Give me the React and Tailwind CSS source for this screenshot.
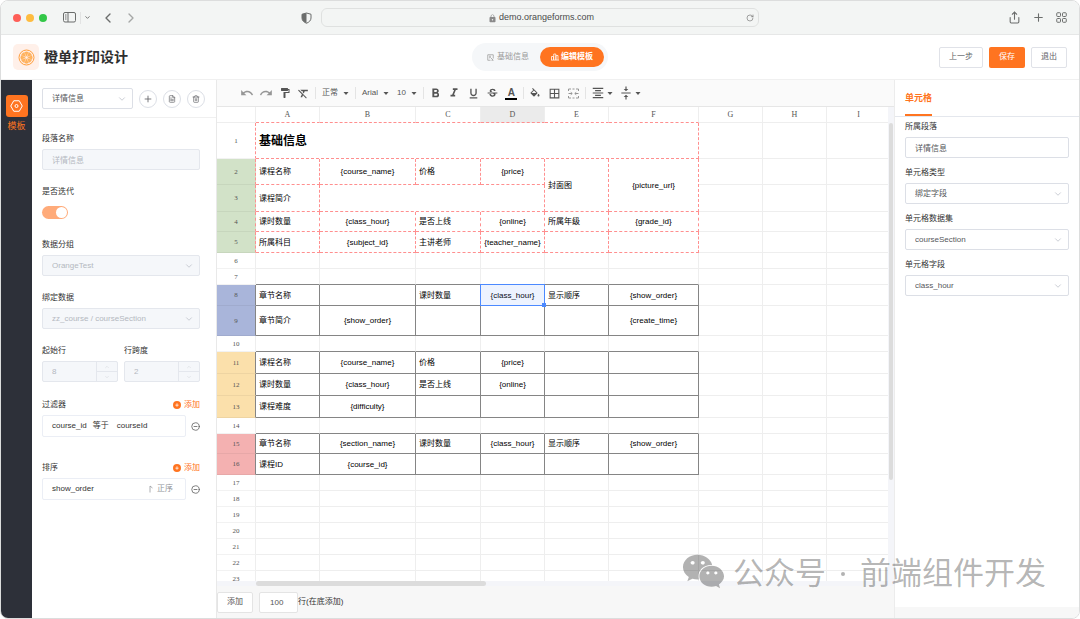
import { useState } from 'react';
import { clsx } from 'clsx';
import { ChevronDown, ChevronLeft, ChevronRight, ChevronUp, CircleMinus, FileText, Plus, RotateCw, Share, Trash2 } from 'lucide-react';
import {
    MdBorderAll,
    MdFormatAlignCenter,
    MdFormatBold,
    MdFormatClear,
    MdFormatItalic,
    MdFormatPaint,
    MdFormatUnderlined,
    MdLock,
    MdRedo,
    MdStrikethroughS,
    MdUndo,
    MdVerticalAlignCenter,
} from 'react-icons/md';
import { FaCirclePlus, FaWeixin } from 'react-icons/fa6';

const COLUMNS = [
    { name: 'A', width: 'w-16' },
    { name: 'B', width: 'w-24' },
    { name: 'C', width: 'w-[65px]' },
    { name: 'D', width: 'w-16' },
    { name: 'E', width: 'w-16' },
    { name: 'F', width: 'w-[90px]' },
    { name: 'G', width: 'w-16' },
    { name: 'H', width: 'w-16' },
    { name: 'I', width: 'w-16' },
];

// section: which print block the row belongs to, it decides the header colour and the cell borders
const ROWS = [
    { height: 'h-9', section: 'title', cells: { A: { text: '基础信息', colSpan: 6, title: true } } },
    {
        height: 'h-[26px]',
        section: 'detail',
        cells: {
            A: { text: '课程名称' },
            B: { text: '{course_name}', center: true },
            C: { text: '价格' },
            D: { text: '{price}', center: true },
            E: { text: '封面图', rowSpan: 2 },
            F: { text: '{picture_url}', center: true, rowSpan: 2 },
        },
    },
    {
        height: 'h-[27px]',
        section: 'detail',
        cells: { A: { text: '课程简介' }, B: { text: '', colSpan: 3 }, E: { covered: true }, F: { covered: true } },
    },
    {
        height: 'h-5',
        section: 'detail',
        cells: {
            A: { text: '课时数量' },
            B: { text: '{class_hour}', center: true },
            C: { text: '是否上线' },
            D: { text: '{online}', center: true },
            E: { text: '所属年级' },
            F: { text: '{grade_id}', center: true },
        },
    },
    {
        height: 'h-[21px]',
        section: 'detail',
        cells: {
            A: { text: '所属科目' },
            B: { text: '{subject_id}', center: true },
            C: { text: '主讲老师' },
            D: { text: '{teacher_name}', center: true },
        },
    },
    { height: 'h-4' },
    { height: 'h-4' },
    {
        height: 'h-[21px]',
        section: 'chapter',
        cells: {
            A: { text: '章节名称' },
            C: { text: '课时数量' },
            D: { text: '{class_hour}', center: true, selected: true },
            E: { text: '显示顺序' },
            F: { text: '{show_order}', center: true },
        },
    },
    {
        height: 'h-[30px]',
        section: 'chapter',
        cells: {
            A: { text: '章节简介' },
            B: { text: '{show_order}', center: true },
            F: { text: '{create_time}', center: true },
        },
    },
    { height: 'h-4' },
    {
        height: 'h-[22px]',
        section: 'course',
        cells: {
            A: { text: '课程名称' },
            B: { text: '{course_name}', center: true },
            C: { text: '价格' },
            D: { text: '{price}', center: true },
        },
    },
    {
        height: 'h-[22px]',
        section: 'course',
        cells: {
            A: { text: '课时数量' },
            B: { text: '{class_hour}', center: true },
            C: { text: '是否上线' },
            D: { text: '{online}', center: true },
        },
    },
    {
        height: 'h-[22px]',
        section: 'course',
        cells: { A: { text: '课程难度' }, B: { text: '{difficulty}', center: true } },
    },
    { height: 'h-4' },
    {
        height: 'h-5',
        section: 'list',
        cells: {
            A: { text: '章节名称' },
            B: { text: '{section_name}', center: true },
            C: { text: '课时数量' },
            D: { text: '{class_hour}', center: true },
            E: { text: '显示顺序' },
            F: { text: '{show_order}', center: true },
        },
    },
    {
        height: 'h-[21px]',
        section: 'list',
        cells: { A: { text: '课程ID' }, B: { text: '{course_id}', center: true } },
    },
    { height: 'h-4' },
    { height: 'h-4' },
    { height: 'h-4' },
    { height: 'h-4' },
    { height: 'h-4' },
    { height: 'h-4' },
    { height: 'h-4' },
];

const SECTION_HEADER = {
    detail: 'bg-[#d2e2c8]',
    chapter: 'bg-[#a9b5da]',
    course: 'bg-[#fbe0ab]',
    list: 'bg-[#f4b1b1]',
};

const BOTTOM_BORDER = {
    dashed: '[border-bottom-style:dashed] border-b-[#ff8f8f]',
    solid: 'border-b-[#858585]',
};

const RIGHT_BORDER = {
    dashed: '[border-right-style:dashed] border-r-[#ff8f8f]',
    solid: 'border-r-[#858585]',
};

const lineOf = (section) => {
    if (!section) return null;
    return section === 'title' || section === 'detail' ? 'dashed' : 'solid';
};

function BrowserBar() {
    return (
        <div className="flex h-[34px] shrink-0 items-center border-b border-[#e6e7e7] bg-[#f3f5f4] text-[#6b6d6c]">
            <div className="flex flex-1 items-center pl-3">
                <div className="flex gap-[5px]">
                    <span className="size-2 rounded-full bg-[#fe5f58]" />
                    <span className="size-2 rounded-full bg-[#febc40]" />
                    <span className="size-2 rounded-full bg-[#33c748]" />
                </div>
                <svg className="ml-4 h-[11px] w-[13px]" viewBox="0 0 26 22" fill="none" stroke="currentColor" strokeWidth="2">
                    <rect x="1" y="1" width="24" height="19" rx="3" />
                    <path d="M10 1v19M4 6h3M4 10h3M4 14h3" />
                </svg>
                <span className="ml-1 h-3 w-px bg-[#e2e3e3]" />
                <ChevronDown className="ml-[3px] size-[7px]" strokeWidth={3} />
                <button type="button" aria-label="后退" className="ml-[9px]">
                    <ChevronLeft className="size-4" strokeWidth={2} />
                </button>
                <button type="button" aria-label="前进" className="ml-[7px] text-[#a5a7a6]">
                    <ChevronRight className="size-4" strokeWidth={2} />
                </button>
                <svg className="mr-[9px] ml-auto h-3 w-[11px]" viewBox="0 0 22 24">
                    <path d="M11 2 20 4.500v7.500c0 5-4 8.500-9 10.500-5-2-9-5.500-9-10.500V4.500z" fill="none" stroke="currentColor" strokeWidth="2" />
                    <path d="M11 2v20.500c-5-2-9-5.500-9-10.500V4.500z" fill="currentColor" />
                </svg>
            </div>
            <div className="flex h-[19px] w-[438px] items-center rounded-md border border-[#dfe1e0] px-1 text-[9px] text-[#4b4b4b]">
                <div className="flex flex-1 items-center justify-center gap-0.5 pt-px pl-2.5">
                    <MdLock className="size-[9px] text-[#8a8a8a]" />
                    <span>demo.orangeforms.com</span>
                </div>
                <RotateCw className="size-2 text-[#777]" strokeWidth={2} />
            </div>
            <div className="flex flex-1 items-center justify-end gap-[11px] pr-3">
                <Share className="size-[13px]" strokeWidth={2} />
                <Plus className="size-[13px]" strokeWidth={2} />
                <svg className="size-[11px]" viewBox="0 0 22 22" fill="none" stroke="currentColor" strokeWidth="2">
                    <rect x="1.500" y="1.500" width="7.500" height="7.500" rx="1.500" />
                    <rect x="13" y="1.500" width="7.500" height="7.500" rx="1.500" />
                    <rect x="1.500" y="13" width="7.500" height="7.500" rx="1.500" />
                    <rect x="13" y="13" width="7.500" height="7.500" rx="1.500" />
                </svg>
            </div>
        </div>
    );
}

function OrangeLogo() {
    const spokes = [0, 45, 90, 135, 180, 225, 270, 315];
    return (
        <span className="flex size-[26px] items-center justify-center rounded-[5px] bg-[#fff0e9]">
            <svg className="size-[17px]" viewBox="0 0 34 34">
                <circle cx="17" cy="17" r="15" fill="none" stroke="#ff9d3a" strokeWidth="2" />
                {spokes.map((a) => (
                    <path key={a} d="M17 14.500 13.200 6.500Q17 4 20.800 6.500Z" fill="#ffb45e" stroke="#ff9d3a" strokeWidth="0.600" transform={`rotate(${a} 17 17)`} />
                ))}
            </svg>
        </span>
    );
}

function Header() {
    const outline = 'h-[21px] rounded-[2px] border border-[#e0e2e8] bg-white px-[9px] text-[8px] text-[#606266]';
    return (
        <header className="flex h-[45px] shrink-0 items-center border-b border-[#f0f0f0] bg-white">
            <div className="flex flex-1 items-center gap-[5px] pl-3">
                <OrangeLogo />
                <h1 className="text-[14px] leading-5 font-bold text-[#2f2f2f]">橙单打印设计</h1>
            </div>
            <nav className="flex h-7 items-center rounded-full bg-[#f5f7f9] p-1 text-[8px]">
                <button type="button" className="flex h-5 w-16 items-center justify-center gap-[3px] text-[#999]">
                    <svg className="size-[7px]" viewBox="0 0 14 14" fill="none" stroke="currentColor" strokeWidth="1.500">
                        <path d="M12.500 9V1.500h-11v11H7M4 4.500h4M4 7.500h2M12.500 12.500 6.500 6.500M9 12.500h3.500" />
                    </svg>
                    基础信息
                </button>
                <button type="button" className="flex h-5 w-16 items-center justify-center gap-0.5 rounded-full bg-[#ff7420] font-bold text-white">
                    <svg className="size-2" viewBox="0 0 16 16" fill="none" stroke="currentColor" strokeWidth="1.500">
                        <path d="M1 14V7h4v7M5.500 14V2h4v12M10 14V5h4v9M0 14.200h16" />
                    </svg>
                    编辑模板
                </button>
            </nav>
            <div className="flex flex-1 justify-end gap-1.5 pr-3">
                <button type="button" className={outline}>上一步</button>
                <button type="button" className="h-[21px] rounded-[2px] bg-[#ff7420] px-2.5 text-[8px] text-white">保存</button>
                <button type="button" className={outline}>退出</button>
            </div>
        </header>
    );
}

function Rail() {
    return (
        <aside className="flex w-[31px] shrink-0 flex-col items-center bg-[#2d3039] pt-[15px]">
            <button type="button" className="flex flex-col items-center gap-[3px] text-[#ff7420]">
                <span className="flex size-[22px] items-center justify-center rounded-[3px] bg-[#ff7420] text-white">
                    <svg className="h-3 w-[13px]" viewBox="0 0 26 24" fill="none" stroke="currentColor" strokeWidth="2" strokeLinejoin="round">
                        <path d="M7.500 1.500h11L24.500 12l-6 10.500h-11L1.500 12z" />
                        <circle cx="13" cy="12" r="3" />
                    </svg>
                </span>
                <span className="text-[9px] leading-3">模板</span>
            </button>
        </aside>
    );
}

function SelectBox({ id, value, disabled, className }) {
    return (
        <div className={clsx('relative', className)}>
            <select
                id={id}
                aria-label={id ? undefined : value}
                disabled={disabled}
                className={clsx(
                    'block h-[21px] w-full appearance-none rounded-[2px] border px-[9px] text-[8px] opacity-100',
                    disabled ? 'border-[#e4e7ed] bg-[#f5f7fa] text-[#b4b8c0]' : 'border-[#dcdfe6] bg-white text-[#55575b]'
                )}
            >
                <option>{value}</option>
            </select>
            <ChevronDown className="pointer-events-none absolute top-1.5 right-1.5 size-[10px] text-[#c0c4cc]" strokeWidth={2} />
        </div>
    );
}

function Field({ id, label, children, className }) {
    return (
        <div className={clsx('flex flex-col gap-1', className)}>
            <label htmlFor={id} className="text-[8px] leading-3 text-[#333]">{label}</label>
            {children}
        </div>
    );
}

function NumberBox({ id, value }) {
    return (
        <div className="flex h-[21px] overflow-hidden rounded-[2px] border border-[#e4e7ed] bg-[#f5f7fa] text-[#b4b8c0]">
            <input id={id} type="text" inputMode="numeric" disabled defaultValue={value} className="w-0 flex-1 pl-[9px] text-[8px]" />
            <div className="flex w-[21px] flex-col border-l border-[#e4e7ed]">
                <button type="button" disabled aria-label="增加" className="flex flex-1 items-center justify-center border-b border-[#e4e7ed]">
                    <ChevronUp className="size-1.5" strokeWidth={1} />
                </button>
                <button type="button" disabled aria-label="减少" className="flex flex-1 items-center justify-center">
                    <ChevronDown className="size-1.5" strokeWidth={1} />
                </button>
            </div>
        </div>
    );
}

function ListGroup({ title, children }) {
    return (
        <section className="flex flex-col gap-0.5">
            <div className="flex h-4 items-center justify-between text-[8px]">
                <h2 className="text-[#333]">{title}</h2>
                <button type="button" className="flex items-center gap-[3px] text-[#ff7420]">
                    <FaCirclePlus className="size-2" />
                    添加
                </button>
            </div>
            <div className="flex items-center gap-[5px]">
                <div className="flex h-[22px] flex-1 items-center rounded-[2px] border border-[#ebeef5] px-[9px] text-[8px] text-[#333]">{children}</div>
                <button type="button" aria-label="删除" className="text-[#555]">
                    <CircleMinus className="size-[9px]" strokeWidth={2} />
                </button>
            </div>
        </section>
    );
}

function LeftPanel() {
    const [iterate, setIterate] = useState(true);
    const round = 'flex size-[18px] shrink-0 items-center justify-center rounded-full border border-[#dcdfe6] text-[#606266]';

    return (
        <aside className="w-[185px] shrink-0 border-r border-[#e9e9e9] bg-white">
            <div className="flex h-[38px] items-center gap-1.5 border-b border-[#f0f0f0] pr-[11px] pl-2.5">
                <SelectBox value="详情信息" className="flex-1" />
                <button type="button" aria-label="新增" className={round}>
                    <Plus className="size-[10px]" strokeWidth={2} />
                </button>
                <button type="button" aria-label="复制" className={round}>
                    <FileText className="size-2" strokeWidth={2} />
                </button>
                <button type="button" aria-label="删除" className={round}>
                    <Trash2 className="size-2" strokeWidth={2} />
                </button>
            </div>

            <div className="flex flex-col pt-[15px] pr-4 pl-2.5">
                <div className="flex flex-col gap-4">
                    <Field id="name" label="段落名称">
                        <input
                            id="name"
                            type="text"
                            disabled
                            defaultValue="详情信息"
                            className="h-[21px] rounded-[2px] border border-[#e4e7ed] bg-[#f5f7fa] px-[9px] text-[8px] text-[#b4b8c0]"
                        />
                    </Field>
                    <Field id="iterate" label="是否迭代">
                        <div className="flex h-[21px] items-center">
                            <input
                                id="iterate"
                                type="checkbox"
                                role="switch"
                                checked={iterate}
                                onChange={(e) => setIterate(e.target.checked)}
                                className="flex h-[13px] w-[26px] appearance-none items-center rounded-full bg-[#dcdfe6] p-px before:size-[11px] before:rounded-full before:bg-white checked:justify-end checked:bg-[#ffab7a]"
                            />
                        </div>
                    </Field>
                    <Field id="group" label="数据分组">
                        <SelectBox id="group" value="OrangeTest" disabled />
                    </Field>
                    <Field id="bind" label="绑定数据">
                        <SelectBox id="bind" value="zz_course / courseSection" disabled />
                    </Field>
                    <div className="grid grid-cols-2 gap-1.5">
                        <Field id="start" label="起始行">
                            <NumberBox id="start" value="8" />
                        </Field>
                        <Field id="span" label="行跨度">
                            <NumberBox id="span" value="2" />
                        </Field>
                    </div>
                </div>

                <div className="mt-[15px] flex flex-col gap-[23px]">
                    <ListGroup title="过滤器">
                        <span>course_id</span>
                        <span className="ml-1.5">等于</span>
                        <span className="ml-2">courseId</span>
                    </ListGroup>
                    <ListGroup title="排序">
                        <span className="flex-1">show_order</span>
                        <span className="flex items-center gap-1 pr-[3px] text-[#909399]">
                            <svg className="h-2 w-1" viewBox="0 0 8 16" fill="none" stroke="currentColor" strokeWidth="1.500">
                                <path d="M2 15V2l5 4" />
                            </svg>
                            正序
                        </span>
                    </ListGroup>
                </div>
            </div>
        </aside>
    );
}

function ToolButton({ label, children, faded }) {
    return (
        <button type="button" aria-label={label} className={clsx('flex h-5 w-[19px] items-center justify-center', faded && 'opacity-60')}>
            {children}
        </button>
    );
}

function ToolDropdown({ label, children, tight }) {
    return (
        <button type="button" aria-label={label} className={clsx('flex h-5 items-center text-[8px]', tight ? 'gap-0.5 px-[3px]' : 'gap-[5px] px-1')}>
            {children}
            <svg className="h-[3px] w-1.5" viewBox="0 0 12 6" fill="currentColor">
                <path d="M1 0h10L6 6z" />
            </svg>
        </button>
    );
}

function Divider() {
    return <span className="mx-0.5 h-3 w-px bg-[#e4e4e4]" />;
}

function Toolbar() {
    return (
        <div className="flex h-[27px] shrink-0 items-center border-b border-[#e6e6e6] bg-[#fafafa] pl-5 text-[#555]">
            <ToolButton label="撤销" faded><MdUndo className="size-[14px]" /></ToolButton>
            <ToolButton label="重做" faded><MdRedo className="size-[14px]" /></ToolButton>
            <ToolButton label="格式刷"><MdFormatPaint className="size-3" /></ToolButton>
            <ToolButton label="清除格式"><MdFormatClear className="size-[13px]" /></ToolButton>
            <Divider />
            <ToolDropdown>正常</ToolDropdown>
            <Divider />
            <ToolDropdown>Arial</ToolDropdown>
            <ToolDropdown>10</ToolDropdown>
            <Divider />
            <ToolButton label="加粗"><MdFormatBold className="size-[15px]" /></ToolButton>
            <ToolButton label="斜体"><MdFormatItalic className="size-[14px]" /></ToolButton>
            <ToolButton label="下划线"><MdFormatUnderlined className="size-[13px]" /></ToolButton>
            <ToolButton label="删除线"><MdStrikethroughS className="size-[13px]" /></ToolButton>
            <ToolButton label="字体颜色">
                <span className="w-3 border-b-2 border-black text-center text-[10px] leading-[11px] font-bold">A</span>
            </ToolButton>
            <Divider />
            <ToolButton label="填充颜色">
                <svg className="size-3" viewBox="0 0 24 20" fill="currentColor">
                    <path d="M16.560 8.940 7.620 0 6.210 1.410l2.380 2.380-5.150 5.150c-.59.59-.59 1.540 0 2.120l5.500 5.500c.29.29.68.44 1.060.44s.77-.15 1.060-.44l5.500-5.500c.59-.58.59-1.530 0-2.120zM5.210 10 10 5.210 14.790 10zM19 11.500s-2 2.170-2 3.500c0 1.100.9 2 2 2s2-.9 2-2c0-1.330-2-3.500-2-3.500z" />
                </svg>
            </ToolButton>
            <ToolButton label="边框"><MdBorderAll className="size-[13px]" /></ToolButton>
            <ToolButton label="合并单元格" faded>
                <svg className="size-[11px]" viewBox="0 0 22 22" fill="none" stroke="currentColor" strokeWidth="2">
                    <path d="M1 6V2h5M9 2h4M16 2h5v4M1 16v4h5M9 20h4M16 20h5v-4M1 11h7M5.500 8.500 8.500 11l-3 2.500M21 11h-7M16.500 8.500l-3 2.500 3 2.500" />
                </svg>
            </ToolButton>
            <Divider />
            <ToolDropdown label="水平对齐" tight><MdFormatAlignCenter className="size-[14px]" /></ToolDropdown>
            <ToolDropdown label="垂直对齐" tight><MdVerticalAlignCenter className="size-[14px]" /></ToolDropdown>
        </div>
    );
}

function SheetRow({ row, index }) {
    const line = lineOf(row.section);
    const next = lineOf(ROWS[index + 1]?.section);
    const cells = [];

    for (let c = 0; c < COLUMNS.length; c++) {
        const col = COLUMNS[c].name;
        const inBox = c < 6;
        const cell = row.cells?.[col] || {};
        if (cell.covered) continue;
        cells.push(
            <td
                key={col}
                colSpan={cell.colSpan}
                rowSpan={cell.rowSpan}
                className={clsx(
                    'border-r border-b border-[#eee] p-0 pt-px whitespace-nowrap',
                    inBox && RIGHT_BORDER[line],
                    inBox && BOTTOM_BORDER[line || next],
                    cell.center ? 'text-center' : 'pl-[3px]',
                    cell.title && 'text-[12px] font-bold',
                    cell.selected && 'relative'
                )}
            >
                {cell.text}
                {cell.selected && (
                    <span className="absolute -inset-px border border-[#4b89ff] bg-[#4b89ff]/10">
                        <span className="absolute -right-0.5 -bottom-0.5 size-1 bg-[#4b89ff]" />
                    </span>
                )}
            </td>
        );
        if (cell.colSpan) c += cell.colSpan - 1;
    }

    return (
        <tr className={row.height}>
            <th
                className={clsx(
                    'border-r border-b border-[#eee] border-b-black/5 p-0 pt-px font-["Liberation_Serif",serif] text-[7px] font-normal text-[#555]',
                    SECTION_HEADER[row.section],
                    RIGHT_BORDER[line]
                )}
            >
                {index + 1}
            </th>
            {cells}
            <td className="border-b border-[#eee] p-0" />
        </tr>
    );
}

function Sheet() {
    return (
        <main className="flex min-w-0 flex-1 flex-col bg-[#f7f7f7]">
            <Toolbar />
            <div className="flex min-h-0 flex-1 flex-col bg-white">
                <div className="flex min-h-0 flex-1">
                    <div className="min-w-0 flex-1 overflow-hidden">
                        <table className="w-full table-fixed border-separate border-spacing-0 text-[8px] leading-none text-black">
                            <colgroup>
                                <col className="w-[39px]" />
                                {COLUMNS.map((c) => <col key={c.name} className={c.width} />)}
                                <col />
                            </colgroup>
                            <thead>
                                <tr className="h-4 font-['Liberation_Serif',serif] text-[#555]">
                                    <th className="border-r border-b border-[#eee] p-0" />
                                    {COLUMNS.map((c, i) => (
                                        <th
                                            key={c.name}
                                            className={clsx(
                                                'border-r border-b border-[#eee] p-0 font-normal',
                                                c.name === 'D' && 'bg-[#ebebeb]',
                                                i < 6 && BOTTOM_BORDER.dashed
                                            )}
                                        >
                                            {c.name}
                                        </th>
                                    ))}
                                    <th className="border-b border-[#eee] p-0" />
                                </tr>
                            </thead>
                            <tbody>
                                {ROWS.map((row, i) => <SheetRow key={i} row={row} index={i} />)}
                            </tbody>
                        </table>
                    </div>
                    <div className="w-1.5 shrink-0 bg-[#f4f5f9] px-px pt-4">
                        <div className="h-[78%] rounded-full bg-[#dcdcdc]" />
                    </div>
                </div>
                <div className="h-[5px] shrink-0 bg-[#f4f5f9] pl-[39px]">
                    <div className="h-full w-[36%] rounded-full bg-[#dcdcdc]" />
                </div>
            </div>
            <div className="flex h-8 shrink-0 items-center text-[8px] text-[#555]">
                <button type="button" className="h-[21px] rounded-[2px] border border-[#e4e4e4] bg-white px-[9px]">添加</button>
                <input id="rows" type="text" defaultValue="100" className="ml-1.5 h-[21px] w-[39px] rounded-[2px] border border-[#e4e4e4] bg-white pl-[10px]" />
                <label htmlFor="rows" className="text-[#333]">行(在底添加)</label>
            </div>
        </main>
    );
}

function RightPanel() {
    return (
        <aside className="flex w-[185px] shrink-0 flex-col border-l border-[#ececec] bg-[#f7f7f7] pb-[11px]">
            <div className="flex-1 bg-white">
                <div className="flex h-[37px] border-b border-[#e4e7ed] px-2.5">
                    <button type="button" className="border-b-2 border-[#ff7420] pt-1 text-[9px] font-bold text-[#ff7420]">
                        单元格
                    </button>
                </div>
                <div className="flex flex-col gap-[9px] px-2.5 pt-1">
                    <Field id="section" label="所属段落">
                        <input
                            id="section"
                            type="text"
                            defaultValue="详情信息"
                            className="h-[21px] rounded-[2px] border border-[#dcdfe6] bg-white px-[9px] text-[8px] text-[#55575b]"
                        />
                    </Field>
                    <Field id="cellType" label="单元格类型">
                        <SelectBox id="cellType" value="绑定字段" />
                    </Field>
                    <Field id="dataset" label="单元格数据集">
                        <SelectBox id="dataset" value="courseSection" />
                    </Field>
                    <Field id="field" label="单元格字段">
                        <SelectBox id="field" value="class_hour" />
                    </Field>
                </div>
            </div>
        </aside>
    );
}

export default function App() {
    return (
        <div className="h-screen bg-white font-['Liberation_Sans','Noto_Sans_CJK_SC',sans-serif]">
            <div className="relative flex h-full flex-col overflow-hidden rounded-lg border border-[#dcdddd]">
                <BrowserBar />
                <Header />
                <div className="flex min-h-0 flex-1">
                    <Rail />
                    <LeftPanel />
                    <Sheet />
                    <RightPanel />
                </div>
                <div className="pointer-events-none absolute right-[33px] bottom-[21px] flex items-center text-[31px] leading-[34px] text-black/30">
                    <FaWeixin className="mr-2 mb-1 size-[43px]" />
                    <span>公众号</span>
                    <span className="mx-[15px] size-1 rounded-full bg-current" />
                    <span>前端组件开发</span>
                </div>
            </div>
        </div>
    );
}
